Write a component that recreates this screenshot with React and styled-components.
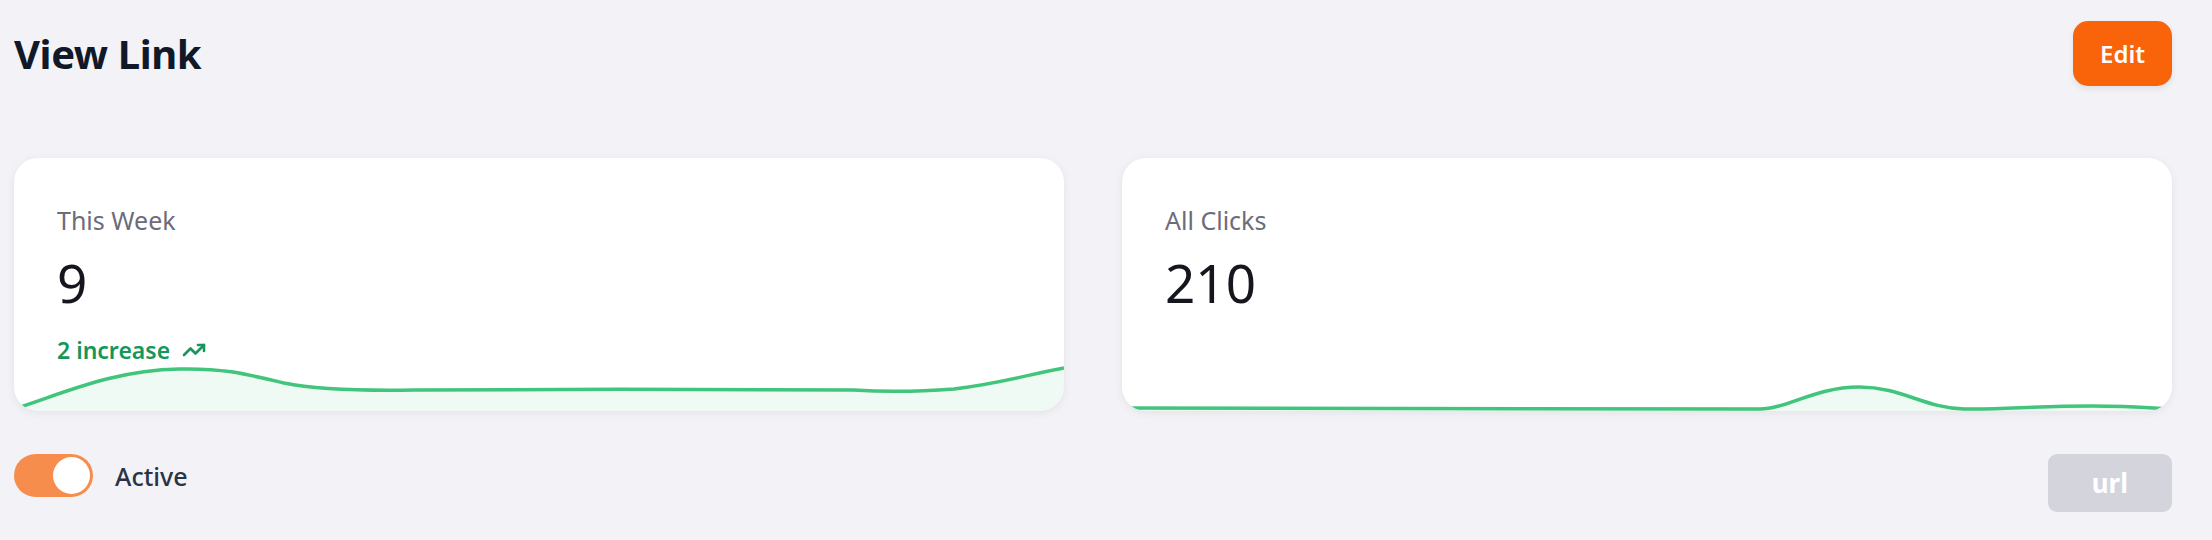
import React from 'react';
import styled, { createGlobalStyle } from 'styled-components';
import { TrendingUp } from 'lucide-react';

const GlobalStyle = createGlobalStyle`
  body {
    margin: 0;
    background: #f3f3f7;
    font-family: 'Noto Sans', 'Open Sans', sans-serif;
  }
`;

const Page = styled.div`
  padding: 21px 40px 28px 14px;
`;

const Header = styled.header`
  display: flex;
  align-items: center;
  justify-content: space-between;
  height: 65px;
`;

const Title = styled.h1`
  margin: 0;
  font-size: 40px;
  font-weight: 700;
  letter-spacing: -0.4px;
  color: #111827;
`;

const Button = styled.button`
  border: 0;
  border-radius: ${props => (props.$muted ? '9px' : '15px')};
  padding: 0 ${props => (props.$muted ? '44px' : '27px')};
  height: ${props => (props.$muted ? '58px' : '65px')};
  background: ${props => (props.$muted ? '#d4d4dd' : '#f9640b')};
  color: #fff;
  font-family: inherit;
  font-size: ${props => (props.$muted ? '26px' : '24px')};
  font-weight: ${props => (props.$muted ? 700 : 600)};
  box-shadow: ${props => (props.$muted ? 'none' : '0 3px 6px rgba(0, 0, 0, 0.08)')};
  cursor: pointer;
`;

const Stats = styled.section`
  display: grid;
  grid-template-columns: 1fr 1fr;
  gap: 58px;
  margin-top: 72px;
`;

const Card = styled.div`
  display: flex;
  flex-direction: column;
  height: 253px;
  background: #fff;
  border-radius: 24px;
  box-shadow: 0 2px 8px rgba(30, 30, 60, 0.08);
  overflow: hidden;
`;

const CardBody = styled.div`
  flex: 1 1 auto;
  min-height: 0;
  padding: 44px 43px 0;
`;

const Label = styled.div`
  font-size: 25px;
  line-height: 36px;
  color: #6b6b7a;
`;

const Value = styled.div`
  margin-top: 14px;
  font-size: 53px;
  line-height: 62px;
  font-weight: 400;
  color: #16161f;
`;

const Delta = styled.div`
  display: flex;
  align-items: center;
  gap: 12px;
  margin-top: 20px;
  font-size: 23px;
  font-weight: 600;
  color: #14975a;
`;

const Chart = styled.svg`
  display: block;
  flex-shrink: 0;
  width: 100%;
  height: 50px;
`;

const Footer = styled.footer`
  display: flex;
  align-items: flex-start;
  justify-content: space-between;
  margin-top: 43px;
`;

const Switch = styled.div`
  display: flex;
  align-items: center;
  gap: 22px;
  height: 43px;
`;

const Track = styled.span`
  position: relative;
  width: 79px;
  height: 43px;
  border-radius: 22px;
  background: ${props => (props.$on ? '#f78d4c' : '#d4d4dd')};
`;

const Knob = styled.span`
  position: absolute;
  top: 3px;
  left: ${props => (props.$on ? '39px' : '4px')};
  width: 37px;
  height: 37px;
  border-radius: 50%;
  background: #fff;
`;

const SwitchLabel = styled.span`
  font-size: 25px;
  font-weight: 500;
  color: #2b3245;
`;

const weekLine =
  'M0 48 C50 32 100 9 165 8 C210 7 232 13 270 22 C300 28 340 30 400 29 C500 28 800 28 840 29 C870 31 900 31 940 28 C990 22 1020 12 1050 7';
const allLine =
  'M0 47 C300 48 520 49 638 48 C664 48 694 26 737 26 C780 26 802 47 842 48 C880 49 910 45 970 45 C1010 45 1030 47 1050 48';

const Sparkline = ({ d }) => (
  <Chart viewBox="0 0 1050 50" preserveAspectRatio="none">
    <path d={`${d} L1050 50 L0 50 Z`} fill="#41c47b" fillOpacity="0.09" />
    <path
      d={d}
      fill="none"
      stroke="#41c47b"
      strokeWidth="3.5"
      vectorEffect="non-scaling-stroke"
    />
  </Chart>
);

const StatCard = ({ label, value, delta, line }) => (
  <Card>
    <CardBody>
      <Label>{label}</Label>
      <Value>{value}</Value>
      {delta && (
        <Delta>
          {delta}
          <TrendingUp size={24} strokeWidth={2.6} />
        </Delta>
      )}
    </CardBody>
    <Sparkline d={line} />
  </Card>
);

const App = () => {
  return (
    <>
      <GlobalStyle />
      <Page>
        <Header>
          <Title>View Link</Title>
          <Button>Edit</Button>
        </Header>

        <Stats>
          <StatCard label="This Week" value="9" delta="2 increase" line={weekLine} />
          <StatCard label="All Clicks" value="210" line={allLine} />
        </Stats>

        <Footer>
          <Switch>
            <Track $on>
              <Knob $on />
            </Track>
            <SwitchLabel>Active</SwitchLabel>
          </Switch>
          <Button $muted>url</Button>
        </Footer>
      </Page>
    </>
  );
};

export default App;
